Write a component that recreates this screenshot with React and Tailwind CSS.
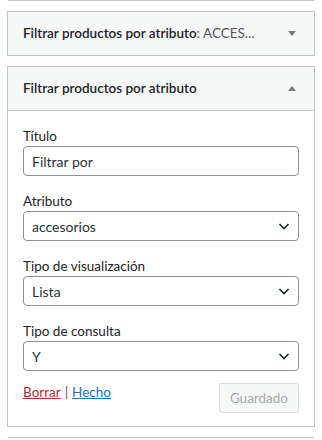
const font = { fontFamily: 'Lato, "Noto Sans", Arial, sans-serif' };

const Chevron = () => (
  <svg
    width="12"
    height="12"
    viewBox="0 0 12 12"
    className="absolute right-[9px] top-1/2 -translate-y-1/2 pointer-events-none"
  >
    <path d="M1.5 4 L6 8.5 L10.5 4" fill="none" stroke="#1d2327" strokeWidth="1.6" />
  </svg>
);

const Field = ({ label, value, select }) => (
  <div className="flex flex-col">
    <label className="text-[13.5px] leading-[19px] text-[#1d2327]">{label}</label>
    <div className="relative">
      <div className="h-[30px] border border-[#8c8f94] rounded-[4px] bg-white px-[8px] flex items-center text-[14px] text-[#2c3338]">
        {value}
      </div>
      {select && <Chevron />}
    </div>
  </div>
);

const WidgetHeader = ({ children, open }) => (
  <div className="h-[43px] flex items-center pl-[15px] pr-[18px] bg-[#f6f7f7]">
    <div className="flex-1 min-w-0 whitespace-nowrap text-[13.5px] font-semibold text-[#1d2327]">
      {children}
    </div>
    <span
      className={
        open
          ? "w-0 h-0 border-x-[4px] border-x-transparent border-b-[5px] border-b-[#787c82]"
          : "w-0 h-0 border-x-[4px] border-x-transparent border-t-[5px] border-t-[#787c82]"
      }
    />
  </div>
);

export default function App() {
  return (
    <div className="w-[322px] h-[440px] bg-white overflow-hidden px-[7px] flex flex-col" style={font}>
      <div className="border-t border-[#c3c4c7] mx-[1px]" />

      <div className="mt-[10px] border border-[#c3c4c7]">
        <WidgetHeader>
          Filtrar productos por atributo
          <span className="font-normal text-[#50575e]">: ACCES...</span>
        </WidgetHeader>
      </div>

      <div className="mt-[10px] border border-[#c3c4c7]">
        <div className="border-b border-[#c3c4c7]">
          <WidgetHeader open>Filtrar productos por atributo</WidgetHeader>
        </div>
        <div className="px-[15px] pt-[16px] pb-[13px] flex flex-col gap-[16px]">
          <Field label="Título" value="Filtrar por" />
          <Field label="Atributo" value="accesorios" select />
          <Field label="Tipo de visualización" value="Lista" select />
          <Field label="Tipo de consulta" value="Y" select />
          <div className="flex items-start justify-between -mt-[4px]">
            <div className="text-[13.5px] leading-[19px] text-[#50575e]">
              <a href="#" className="text-[#b32d2e] underline">Borrar</a>
              <span className="mx-[4px]">|</span>
              <a href="#" className="text-[#2271b1] underline">Hecho</a>
            </div>
            <button
              disabled
              className="h-[30px] px-[10px] border border-[#dcdcde] rounded-[3px] bg-[#f6f7f7] text-[#a7aaad] text-[13.5px]"
            >
              Guardado
            </button>
          </div>
        </div>
      </div>

      <div className="mt-[10px] border-t border-[#c3c4c7] mx-[1px]" />
    </div>
  );
}
